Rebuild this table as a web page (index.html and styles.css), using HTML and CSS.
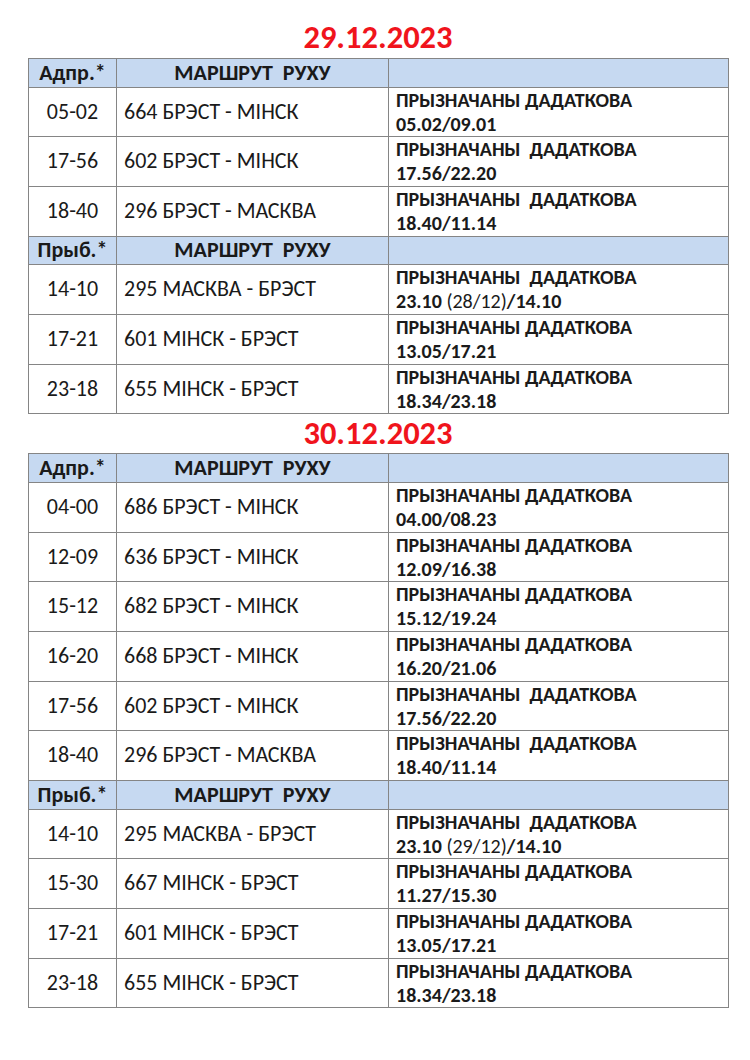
FILE: index.html
```html
<!DOCTYPE html>
<html lang="be">
<head>
<meta charset="utf-8">
<title>Расклад</title>
<link rel="stylesheet" href="styles.css">
</head>
<body>
<div class="page">
  <h1 class="date date-first">29.12.2023</h1>
  <table class="sched">
    <colgroup><col class="c1"><col class="c2"><col class="c3"></colgroup>
    <tr class="head"><th>Адпр.*</th><th>МАРШРУТ&nbsp; РУХУ</th><th></th></tr>
    <tr><td class="time">05-02</td><td class="route">664 БРЭСТ - МІНСК</td><td class="note">ПРЫЗНАЧАНЫ ДАДАТКОВА<br>05.02/09.01</td></tr>
    <tr><td class="time">17-56</td><td class="route">602 БРЭСТ - МІНСК</td><td class="note">ПРЫЗНАЧАНЫ&nbsp; ДАДАТКОВА<br>17.56/22.20</td></tr>
    <tr><td class="time">18-40</td><td class="route">296 БРЭСТ - МАСКВА</td><td class="note">ПРЫЗНАЧАНЫ&nbsp; ДАДАТКОВА<br>18.40/11.14</td></tr>
    <tr class="head"><th>Прыб.*</th><th>МАРШРУТ&nbsp; РУХУ</th><th></th></tr>
    <tr><td class="time">14-10</td><td class="route">295 МАСКВА - БРЭСТ</td><td class="note">ПРЫЗНАЧАНЫ&nbsp; ДАДАТКОВА<br>23.10 <span class="reg">(28/12)</span>/14.10</td></tr>
    <tr><td class="time">17-21</td><td class="route">601 МІНСК - БРЭСТ</td><td class="note">ПРЫЗНАЧАНЫ ДАДАТКОВА<br>13.05/17.21</td></tr>
    <tr><td class="time">23-18</td><td class="route">655 МІНСК - БРЭСТ</td><td class="note">ПРЫЗНАЧАНЫ ДАДАТКОВА<br>18.34/23.18</td></tr>
  </table>

  <h1 class="date date-second">30.12.2023</h1>
  <table class="sched">
    <colgroup><col class="c1"><col class="c2"><col class="c3"></colgroup>
    <tr class="head"><th>Адпр.*</th><th>МАРШРУТ&nbsp; РУХУ</th><th></th></tr>
    <tr><td class="time">04-00</td><td class="route">686 БРЭСТ - МІНСК</td><td class="note">ПРЫЗНАЧАНЫ ДАДАТКОВА<br>04.00/08.23</td></tr>
    <tr><td class="time">12-09</td><td class="route">636 БРЭСТ - МІНСК</td><td class="note">ПРЫЗНАЧАНЫ ДАДАТКОВА<br>12.09/16.38</td></tr>
    <tr><td class="time">15-12</td><td class="route">682 БРЭСТ - МІНСК</td><td class="note">ПРЫЗНАЧАНЫ ДАДАТКОВА<br>15.12/19.24</td></tr>
    <tr><td class="time">16-20</td><td class="route">668 БРЭСТ - МІНСК</td><td class="note">ПРЫЗНАЧАНЫ ДАДАТКОВА<br>16.20/21.06</td></tr>
    <tr><td class="time">17-56</td><td class="route">602 БРЭСТ - МІНСК</td><td class="note">ПРЫЗНАЧАНЫ&nbsp; ДАДАТКОВА<br>17.56/22.20</td></tr>
    <tr><td class="time">18-40</td><td class="route">296 БРЭСТ - МАСКВА</td><td class="note">ПРЫЗНАЧАНЫ&nbsp; ДАДАТКОВА<br>18.40/11.14</td></tr>
    <tr class="head"><th>Прыб.*</th><th>МАРШРУТ&nbsp; РУХУ</th><th></th></tr>
    <tr><td class="time">14-10</td><td class="route">295 МАСКВА - БРЭСТ</td><td class="note">ПРЫЗНАЧАНЫ&nbsp; ДАДАТКОВА<br>23.10 <span class="reg">(29/12)</span>/14.10</td></tr>
    <tr><td class="time">15-30</td><td class="route">667 МІНСК - БРЭСТ</td><td class="note">ПРЫЗНАЧАНЫ ДАДАТКОВА<br>11.27/15.30</td></tr>
    <tr><td class="time">17-21</td><td class="route">601 МІНСК - БРЭСТ</td><td class="note">ПРЫЗНАЧАНЫ ДАДАТКОВА<br>13.05/17.21</td></tr>
    <tr><td class="time">23-18</td><td class="route">655 МІНСК - БРЭСТ</td><td class="note">ПРЫЗНАЧАНЫ ДАДАТКОВА<br>18.34/23.18</td></tr>
  </table>
</div>
</body>
</html>
```

FILE: styles.css
```css
html, body {
  margin: 0;
  padding: 0;
  background: #ffffff;
}
body {
  font-family: "Carlito", "Open Sans", "Liberation Sans", sans-serif;
  color: #1a1a1a;
}
.page {
  width: 750px;
  padding-left: 28px;
  box-sizing: border-box;
}
.date {
  margin: 0;
  width: 700px;
  text-align: center;
  font-size: 32.5px;
  font-weight: 700;
  color: #f0141c;
}
.date-first {
  margin-top: 17px;
  height: 41px;
  line-height: 41px;
}
.date-second {
  height: 39px;
  line-height: 39px;
}
.sched {
  width: 700px;
  border-collapse: collapse;
  table-layout: fixed;
}
.c1 { width: 88px; }
.c2 { width: 272px; }
.c3 { width: 340px; }
.sched th, .sched td {
  border: 1px solid #858585;
  padding: 0;
}
.head th {
  height: 27.6px;
  background: #c6d9f1;
  font-size: 22px;
  line-height: 1;
  font-weight: 700;
  text-align: center;
  vertical-align: middle;
}
.sched td {
  height: 48.7px;
  vertical-align: middle;
  line-height: 1.2;
}
.time {
  text-align: center;
  font-size: 22px;
}
.route {
  padding-left: 7px !important;
  font-size: 22px;
}
.note {
  padding-left: 7px !important;
  font-size: 20px;
  font-weight: 700;
  line-height: 24px !important;
  vertical-align: top !important;
}
.reg { font-weight: 400; }
```
